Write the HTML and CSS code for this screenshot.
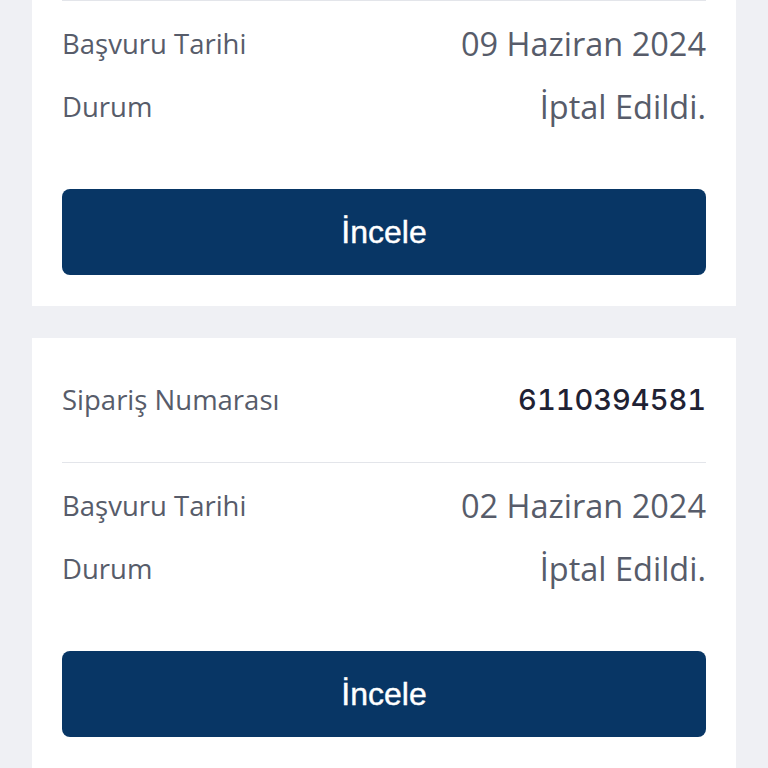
FILE: index.html
```html
<!DOCTYPE html>
<html lang="tr">
<head>
<meta charset="utf-8">
<link rel="stylesheet" href="styles.css">
</head>
<body>
<main class="list">
  <section class="card card-cut">
    <hr class="divider">
    <div class="row">
      <span class="label">Başvuru Tarihi</span>
      <span class="value">09 Haziran 2024</span>
    </div>
    <div class="row">
      <span class="label">Durum</span>
      <span class="value">İptal Edildi.</span>
    </div>
    <button class="btn">İncele</button>
  </section>
  <section class="card">
    <div class="row row-top">
      <span class="label">Sipariş Numarası</span>
      <span class="number">6110394581</span>
    </div>
    <hr class="divider">
    <div class="row">
      <span class="label">Başvuru Tarihi</span>
      <span class="value">02 Haziran 2024</span>
    </div>
    <div class="row">
      <span class="label">Durum</span>
      <span class="value">İptal Edildi.</span>
    </div>
    <button class="btn">İncele</button>
  </section>
</main>
</body>
</html>
```
FILE: styles.css
```css
html, body {
  margin: 0;
  padding: 0;
  background: #eff0f4;
  height: 100%;
  overflow: hidden;
}
.list {
  display: flex;
  flex-direction: column;
  gap: 32px;
  padding: 0 32px;
}
.card {
  background: #ffffff;
  padding: 32px 30px 31px;
  display: flex;
  flex-direction: column;
}
.card-cut {
  padding-top: 0;
}
.row {
  display: flex;
  justify-content: space-between;
  align-items: center;
  height: 63px;
  line-height: 1;
}
.row-top {
  height: 64px;
  margin-bottom: 28px;
}
.row > span {
  padding-bottom: 5px;
}
.divider {
  border: 0;
  height: 1px;
  background: #e3e5ea;
  margin: 0 0 14px;
}
.label, .value {
  font-family: "Open Sans", "Noto Sans", sans-serif;
  font-size: 27.5px;
  color: #575c6a;
}
.value {
  font-size: 32.5px;
}
.number {
  font-family: Inter, "Noto Sans", sans-serif;
  font-size: 29px;
  font-weight: 500;
  font-variant-numeric: tabular-nums;
  color: #1f2234;
}
.btn {
  margin-top: 48px;
  height: 86px;
  border: 0;
  border-radius: 8px;
  background: #083665;
  color: #ffffff;
  font-family: "Liberation Sans", Arial, sans-serif;
  font-size: 32px;
  -webkit-text-stroke: 0.4px #ffffff;
}
```
